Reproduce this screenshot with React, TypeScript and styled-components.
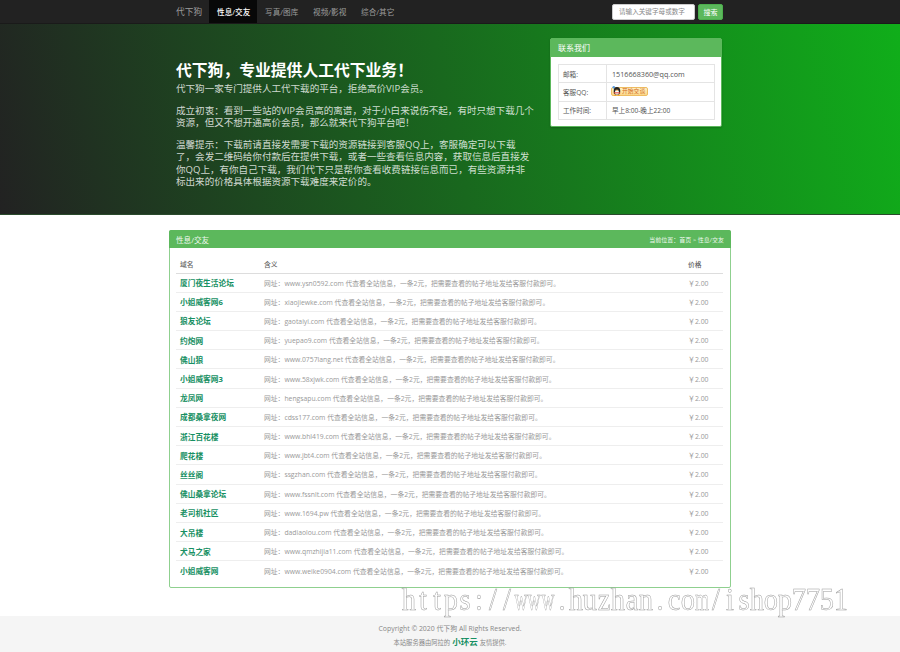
import * as React from "react";
import styled, { createGlobalStyle } from "styled-components";

const GREEN = "#5cb85c";
const FONT = `"Open Sans", "Noto Sans CJK SC", sans-serif`;

const GlobalStyle = createGlobalStyle`
  html, body {
    margin: 0;
    padding: 0;
    background: #fff;
    font-family: ${FONT};
    color: #333;
  }
  * { box-sizing: border-box; }
`;

const Page = styled.div`
  position: relative;
  width: 900px;
  height: 652px;
  overflow: hidden;
`;

const Container = styled.div`
  width: 562px;
  margin: 0 auto;
`;

const Navbar = styled.nav`
  height: 24px;
  background: #222;
  border-bottom: 1px solid #1a1a1a;
`;

const NavInner = styled(Container)`
  display: flex;
  align-items: center;
  height: 23px;
  padding: 0 8px 0 7px;
`;

const Brand = styled.span`
  font-size: 8.7px;
  color: #9d9d9d;
  margin-right: 7px;
`;

const NavItem = styled.a<{ $active?: boolean }>`
  display: flex;
  align-items: center;
  height: 23px;
  padding: 0 8px;
  width: 48px;
  white-space: nowrap;
  font-size: 7.6px;
  color: ${(p) => (p.$active ? "#fff" : "#9d9d9d")};
  background: ${(p) => (p.$active ? "#080808" : "transparent")};
  font-weight: ${(p) => (p.$active ? 500 : 400)};
`;

const SearchForm = styled.div`
  margin-left: auto;
  display: flex;
  gap: 3px;
`;

const SearchInput = styled.input`
  width: 83px;
  height: 16px;
  border: 1px solid #ccc;
  border-radius: 2px;
  padding: 0 6px;
  background: #fff;
  font-family: ${FONT};
  font-size: 6.6px;
  outline: none;
  &::placeholder { color: #888; opacity: 1; }
`;

const SearchButton = styled.button`
  width: 25px;
  height: 16px;
  padding: 0;
  border: 1px solid #4cae4c;
  border-radius: 2px;
  background: ${GREEN};
  color: #fff;
  font-family: ${FONT};
  font-size: 7px;
`;

const Hero = styled.section`
  height: 191px;
  background: linear-gradient(78deg, #222 0%, #10ae1a 100%);
  border-bottom: 1px solid #2a4a2c;
`;

const HeroInner = styled(Container)`
  display: flex;
  justify-content: space-between;
  padding: 14px 9px 0 7px;
`;

const Intro = styled.div`
  width: 362px;
  padding-top: 22px;
  color: rgba(255, 255, 255, 0.8);
  font-size: 9.55px;
  line-height: 12.4px;
  white-space: nowrap;
`;

const HeroTitle = styled.h1`
  margin: 0 0 3px;
  font-size: 15.8px;
  line-height: 20px;
  font-weight: 700;
  color: #fff;
`;

const IntroText = styled.p`
  margin: 0 0 9.4px;
`;

const ContactPanel = styled.aside`
  width: 172px;
  height: 89px;
  background: #fff;
  border: 1px solid ${GREEN};
  border-radius: 2px;
  box-shadow: 0 1px 2px rgba(0, 0, 0, 0.2);
`;

const ContactHead = styled.div`
  height: 18px;
  padding: 0 7px;
  background: ${GREEN};
  color: #fff;
  font-size: 8px;
  line-height: 18px;
`;

const ContactBody = styled.div`
  padding: 7px 7px 0;
`;

const ContactTable = styled.table`
  width: 157px;
  border-collapse: collapse;
  font-size: 6.6px;
  color: #555;
`;

const ContactLabel = styled.td`
  width: 48px;
  height: 18.4px;
  padding: 0 4px;
  border: 1px solid #e4e4e4;
  white-space: nowrap;
`;

const ContactValue = styled.td<{ $large?: boolean }>`
  padding: 0 5px;
  border: 1px solid #e4e4e4;
  white-space: nowrap;
  font-size: ${(p) => (p.$large ? "7.2px" : "6.6px")};
`;

const QQBadge = styled.span`
  display: inline-flex;
  align-items: center;
  height: 9px;
  width: 37px;
  vertical-align: -1px;
  margin-left: -1px;
  border: 1px solid #eebc62;
  border-radius: 2px;
  background: linear-gradient(#fff1c4, #fbd98a);
  color: #d2691e;
  font-size: 5.8px;
  line-height: 1;
`;

const Panel = styled(Container)`
  margin-top: 15px;
  height: 358px;
  border: 1px solid #8fd08f;
  border-radius: 2px;
`;

const PanelHead = styled.div`
  display: flex;
  justify-content: space-between;
  align-items: center;
  height: 18px;
  margin: -1px -1px 0;
  padding: 0 7px;
  background: ${GREEN};
  border-radius: 2px 2px 0 0;
  color: rgba(255, 255, 255, 0.92);
  font-size: 7.6px;
`;

const Crumbs = styled.span`
  font-size: 6px;
`;

const PanelBody = styled.div`
  padding: 8px 7px 0 6px;
`;

const ListTable = styled.table`
  width: 100%;
  table-layout: fixed;
  border-collapse: collapse;
`;

const HeadCell = styled.th<{ $width?: number }>`
  width: ${(p) => (p.$width ? `${p.$width}px` : "auto")};
  height: 17px;
  padding: 0 4px;
  text-align: left;
  font-size: 6.8px;
  font-weight: 500;
  color: #666;
  border-bottom: 1px solid #ddd;
`;

const Row = styled.tr`
  height: 19.2px;
  border-bottom: 1px solid #eee;
  &:last-child { border-bottom: none; }
`;

const NameCell = styled.td`
  padding: 0 4px;
  font-size: 7.7px;
  font-weight: 700;
  color: #179063;
  white-space: nowrap;
`;

const DescCell = styled.td`
  padding: 0 4px;
  font-size: 6.8px;
  color: #999;
  white-space: nowrap;
`;

const PriceCell = styled.td`
  padding: 0 4px;
  font-size: 6.9px;
  color: #999;
  white-space: nowrap;
`;

const Footer = styled.footer`
  margin-top: 28px;
  height: 36px;
  padding-top: 7px;
  background: #f5f5f5;
  text-align: center;
  font-size: 6.9px;
  line-height: 12.5px;
  color: #888;
`;

const FootSmall = styled.div`
  font-size: 6.3px;
`;

const HostName = styled.span`
  margin: 0 2px;
  font-size: 8.5px;
  font-weight: 700;
  color: #179063;
`;

// 水印压在页面上面，每个字母占一个等宽的格子
const Watermark = styled.div`
  position: absolute;
  left: 402px;
  top: 584px;
  display: flex;
  font-family: "Liberation Serif", serif;
  font-size: 31px;
  line-height: 32px;
  white-space: nowrap;
  color: transparent;
  filter: grayscale(1);
  -webkit-text-stroke: 0.5px #9a9a9a;
`;

const Glyph = styled.span<{ $wide: boolean }>`
  display: flex;
  justify-content: center;
  width: 13.94px;
  transform: scaleX(${(p) => (p.$wide ? 0.58 : 0.92)});
`;

const WATERMARK = "https://www.huzhan.com/ishop7751";

const sites = [
  ["厦门夜生活论坛", "www.ysn0592.com"],
  ["小姐威客网6", "xiaojiewke.com"],
  ["狼友论坛", "gaotaiyi.com"],
  ["约炮网", "yuepao9.com"],
  ["佛山狼", "www.0757lang.net"],
  ["小姐威客网3", "www.58xjwk.com"],
  ["龙凤网", "hengsapu.com"],
  ["成都桑拿夜网", "cdss177.com"],
  ["浙江百花楼", "www.bhl419.com"],
  ["爬花楼", "www.jbt4.com"],
  ["丝丝阁", "ssgzhan.com"],
  ["佛山桑拿论坛", "www.fssnlt.com"],
  ["老司机社区", "www.1694.pw"],
  ["大吊楼", "dadiaolou.com"],
  ["犬马之家", "www.qmzhijia11.com"],
  ["小姐威客网", "www.weike0904.com"],
];

function Penguin() {
  return (
    <svg width="9" height="10" viewBox="0 0 9 11" style={{ marginTop: -2, marginRight: 1, flex: "none" }}>
      <circle cx="1.5" cy="1.5" r="1.4" fill="#5b9bdc" />
      <ellipse cx="5" cy="5.5" rx="3.6" ry="4.4" fill="#222" />
      <ellipse cx="5" cy="6.8" rx="2.3" ry="2.8" fill="#fff" />
      <path d="M3.4 4.2 L6.6 4.2 L5 5.6 Z" fill="#f2a11f" />
      <path d="M1.4 7 H8.6 V8.1 H1.4 Z" fill="#e03a2a" />
      <path d="M2 9.6 H4.2 V10.6 H2 Z M5.8 9.6 H8 V10.6 H5.8 Z" fill="#f2a11f" />
    </svg>
  );
}

export default function App() {
  return (
    <Page>
      <GlobalStyle />
      <Navbar>
        <NavInner>
          <Brand>代下狗</Brand>
          <NavItem $active>性息/交友</NavItem>
          <NavItem>写真/图库</NavItem>
          <NavItem>视频/影视</NavItem>
          <NavItem>综合/其它</NavItem>
          <SearchForm>
            <SearchInput placeholder="请输入关键字母或数字" />
            <SearchButton>搜索</SearchButton>
          </SearchForm>
        </NavInner>
      </Navbar>

      <Hero>
        <HeroInner>
          <Intro>
            <HeroTitle>代下狗，专业提供人工代下业务！</HeroTitle>
            <IntroText>代下狗一家专门提供人工代下载的平台，拒绝高价VIP会员。</IntroText>
            <IntroText>
              成立初衷：看到一些站的VIP会员高的离谱，对于小白来说伤不起，有时只想下载几个
              <br />
              资源，但又不想开通高价会员，那么就来代下狗平台吧！
            </IntroText>
            <IntroText>
              温馨提示：下载前请直接发需要下载的资源链接到客服QQ上，客服确定可以下载
              <br />
              了，会发二维码给你付款后在提供下载，或者一些查看信息内容，获取信息后直接发
              <br />
              你QQ上，有你自己下载，我们代下只是帮你查看收费链接信息而已，有些资源并非
              <br />
              标出来的价格具体根据资源下载难度来定价的。
            </IntroText>
          </Intro>
          <ContactPanel>
            <ContactHead>联系我们</ContactHead>
            <ContactBody>
              <ContactTable>
                <tbody>
                  <tr>
                    <ContactLabel>邮箱:</ContactLabel>
                    <ContactValue $large>1516668360@qq.com</ContactValue>
                  </tr>
                  <tr>
                    <ContactLabel>客服QQ:</ContactLabel>
                    <ContactValue>
                      <QQBadge>
                        <Penguin />
                        开始交谈
                      </QQBadge>
                    </ContactValue>
                  </tr>
                  <tr>
                    <ContactLabel>工作时间:</ContactLabel>
                    <ContactValue>早上8:00-晚上22:00</ContactValue>
                  </tr>
                </tbody>
              </ContactTable>
            </ContactBody>
          </ContactPanel>
        </HeroInner>
      </Hero>

      <Panel>
        <PanelHead>
          <span>性息/交友</span>
          <Crumbs>当前位置：首页 &gt; 性息/交友</Crumbs>
        </PanelHead>
        <PanelBody>
          <ListTable>
            <thead>
              <tr>
                <HeadCell $width={84}>域名</HeadCell>
                <HeadCell>含义</HeadCell>
                <HeadCell $width={39}>价格</HeadCell>
              </tr>
            </thead>
            <tbody>
              {sites.map(([name, url]) => (
                <Row key={name}>
                  <NameCell>{name}</NameCell>
                  <DescCell>
                    网址：{url} 代查看全站信息，一条2元，把需要查看的帖子地址发给客服付款即可。
                  </DescCell>
                  <PriceCell>￥2.00</PriceCell>
                </Row>
              ))}
            </tbody>
          </ListTable>
        </PanelBody>
      </Panel>

      <Footer>
        <div>Copyright © 2020 代下狗 All Rights Reserved.</div>
        <FootSmall>
          本站服务器由阿拉的<HostName>小环云</HostName>友情提供.
        </FootSmall>
      </Footer>

      <Watermark>
        {WATERMARK.split("").map((ch, i) => (
          <Glyph key={i} $wide={ch === "w" || ch === "m"}>
            {ch}
          </Glyph>
        ))}
      </Watermark>
    </Page>
  );
}
